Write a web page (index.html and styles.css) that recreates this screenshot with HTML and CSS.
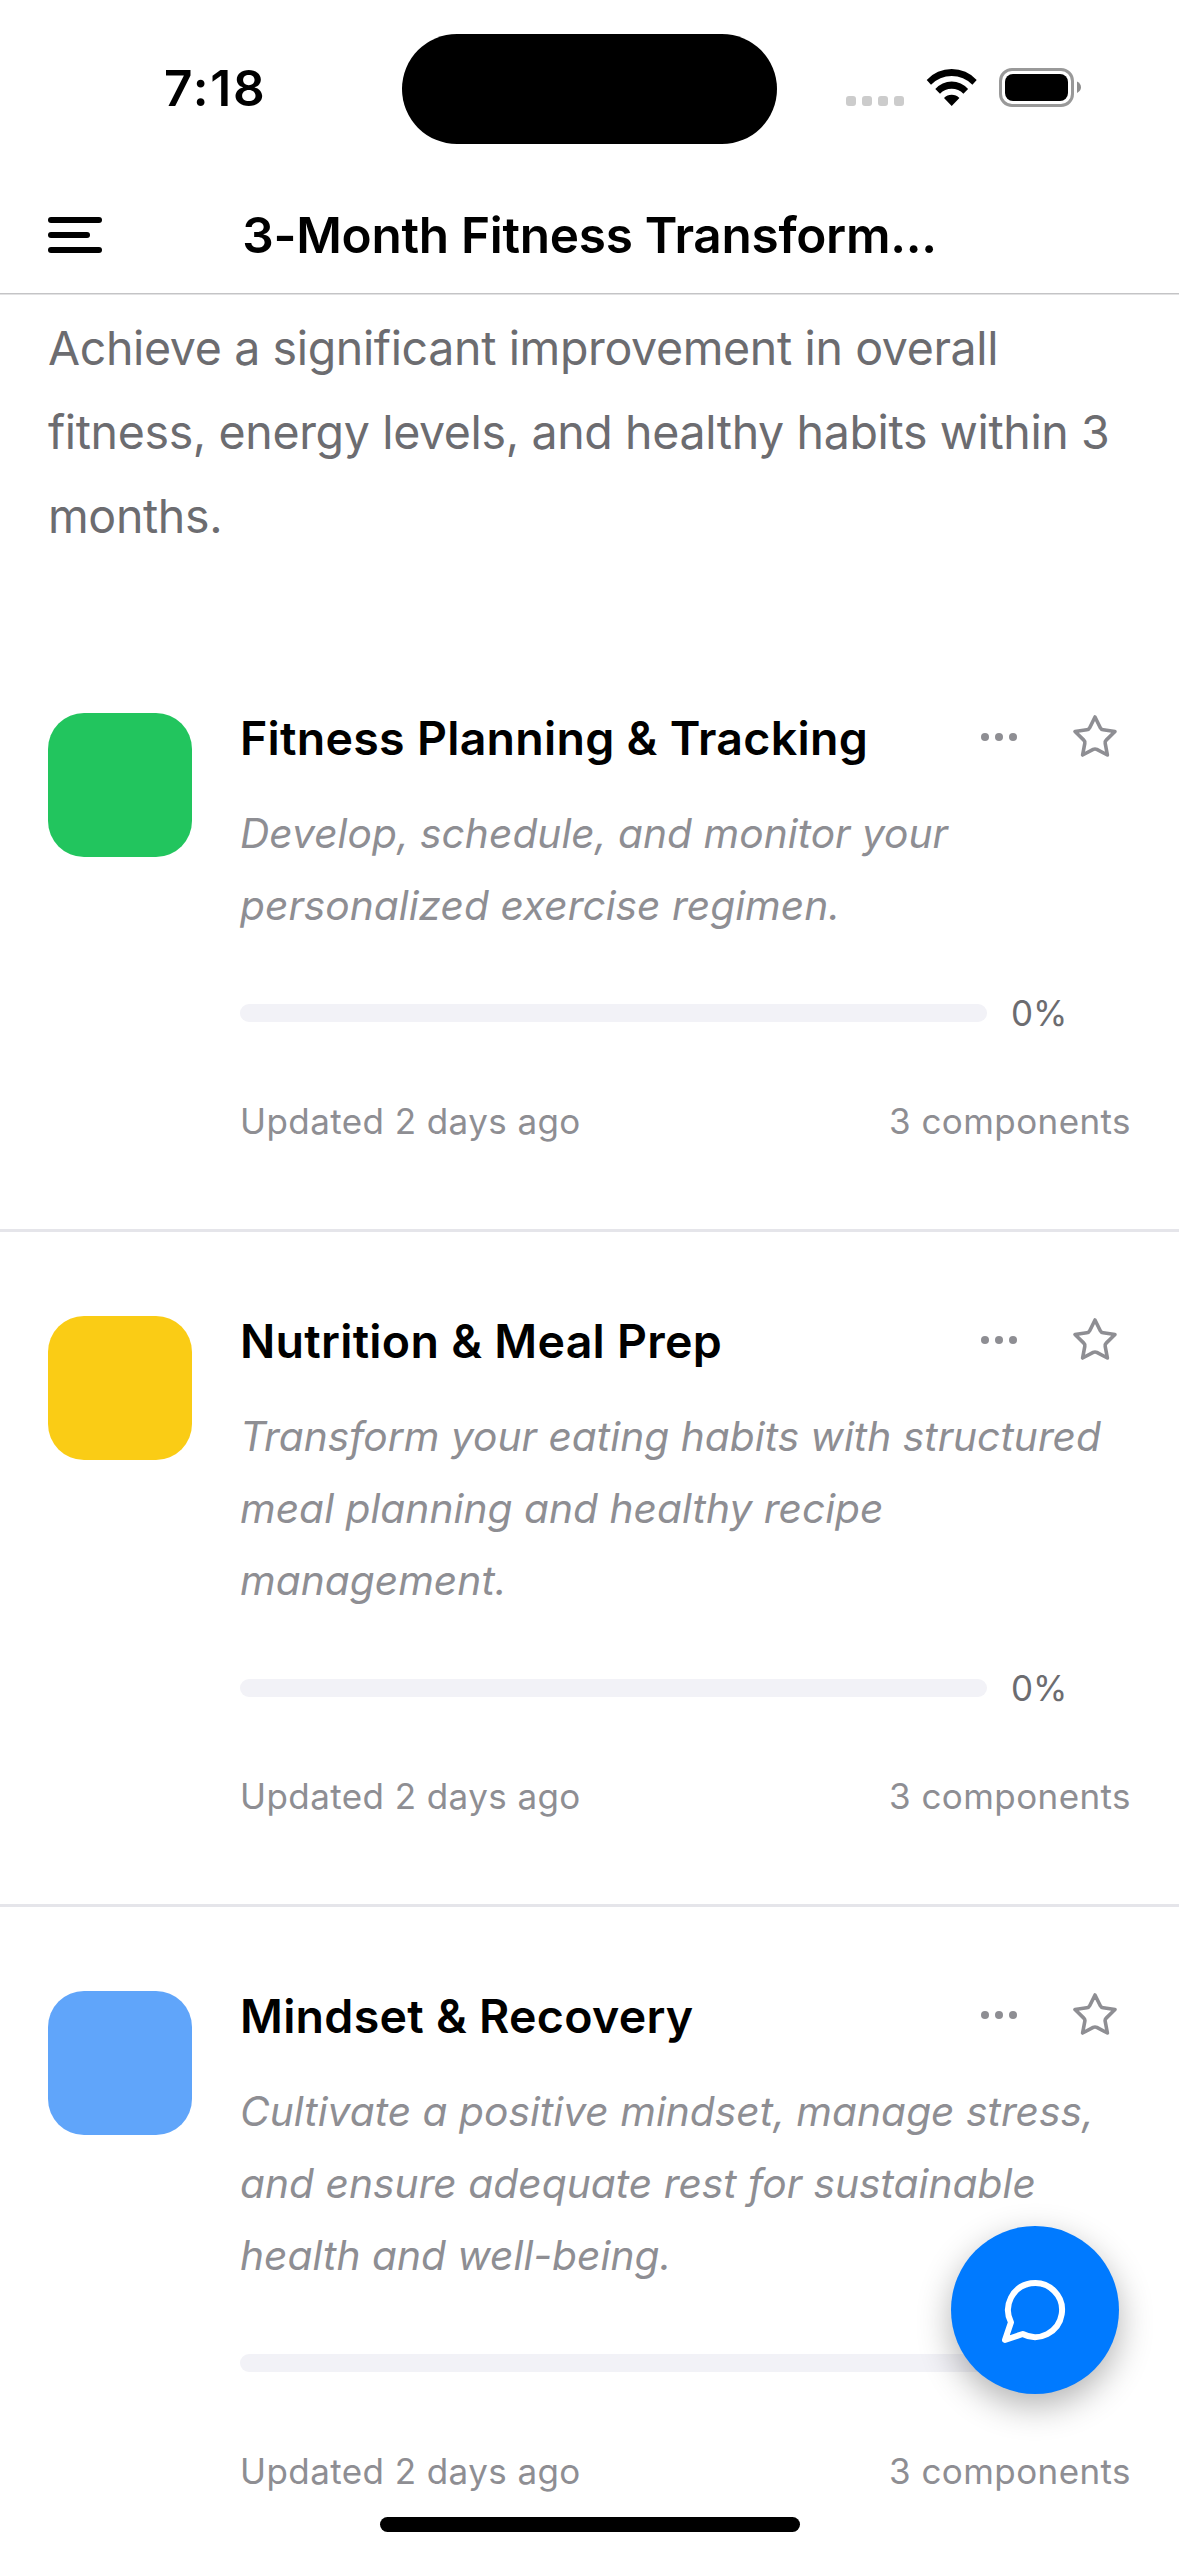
FILE: index.html
```
<!DOCTYPE html>
<html lang="en">
<head>
<meta charset="utf-8">
<title>3-Month Fitness Transformation</title>
<link rel="stylesheet" href="styles.css">
</head>
<body>
<svg class="sprite" aria-hidden="true">
  <symbol id="star" viewBox="0 0 48 48">
    <path d="M24 4L29.3 14.7Q30.2 16.5 32.2 16.8L44 18.5L35.2 27.1Q33.8 28.4 34.2 30.3L36.4 42L25.8 36.4Q24 35.5 22.2 36.4L11.6 42L13.8 30.3Q14.2 28.4 12.8 27.1L4 18.5L15.8 16.8Q17.8 16.5 18.7 14.7Z" fill="none" stroke="#8e8e93" stroke-width="3.6" stroke-linejoin="round"/>
  </symbol>
  <symbol id="more" viewBox="0 0 36 8">
    <circle cx="4" cy="4" r="4" fill="#8e8e93"/><circle cx="18" cy="4" r="4" fill="#8e8e93"/><circle cx="32" cy="4" r="4" fill="#8e8e93"/>
  </symbol>
</svg>
<div class="screen">
  <div class="status">
    <div class="time">7:18</div>
    <div class="island"></div>
    <svg class="indicators" width="236" height="41" viewBox="0 0 236 41">
      <g fill="#ccc">
        <rect x="0" y="28" width="10" height="10" rx="3"/><rect x="16" y="28" width="10" height="10" rx="3"/><rect x="32" y="28" width="10" height="10" rx="3"/><rect x="48" y="28" width="10" height="10" rx="3"/>
      </g>
      <path d="M80.7 12A33.9 33.9 0 0 1 130.7 12L126.4 16.7A29 29 0 0 0 85 16.7ZM89.3 21A21.8 21.8 0 0 1 122.1 21L117.4 25.7A16.4 16.4 0 0 0 94 25.7ZM98 30A11 11 0 0 1 113.4 30L105.7 38Z"/>
      <rect x="154.5" y="1.5" width="72" height="36" rx="11.5" fill="none" stroke="#999" stroke-width="3"/>
      <rect x="159" y="6" width="63" height="27" rx="8"/>
      <path d="M231 13.5Q235 15.5 235 19.3Q235 23 231 25Z" fill="#8e8e8e"/>
    </svg>
  </div>
  <header class="header">
    <div class="menu"><span class="bar"></span><span class="bar bar-short"></span><span class="bar"></span></div>
    <h1 class="title">3-Month Fitness Transform...</h1>
  </header>
  <p class="goal">Achieve a significant improvement in overall fitness, energy levels, and healthy habits within 3 months.</p>

  <article class="card">
    <div class="swatch green"></div>
    <div class="info">
      <div class="head"><h2 class="name">Fitness Planning &amp; Tracking</h2><svg class="more"><use href="#more"/></svg><svg class="star"><use href="#star"/></svg></div>
      <p class="about">Develop, schedule, and monitor your personalized exercise regimen.</p>
      <div class="progress"><div class="track"></div><span class="percent">0%</span></div>
      <div class="meta"><span>Updated 2 days ago</span><span>3 components</span></div>
    </div>
  </article>
  <article class="card">
    <div class="swatch yellow"></div>
    <div class="info">
      <div class="head"><h2 class="name">Nutrition &amp; Meal Prep</h2><svg class="more"><use href="#more"/></svg><svg class="star"><use href="#star"/></svg></div>
      <p class="about">Transform your eating habits with structured meal planning and healthy recipe management.</p>
      <div class="progress"><div class="track"></div><span class="percent">0%</span></div>
      <div class="meta"><span>Updated 2 days ago</span><span>3 components</span></div>
    </div>
  </article>
  <article class="card">
    <div class="swatch blue"></div>
    <div class="info">
      <div class="head"><h2 class="name">Mindset &amp; Recovery</h2><svg class="more"><use href="#more"/></svg><svg class="star"><use href="#star"/></svg></div>
      <p class="about">Cultivate a positive mindset, manage stress, and ensure adequate rest for sustainable health and well-being.</p>
      <div class="progress"><div class="track"></div></div>
      <div class="meta"><span>Updated 2 days ago</span><span>3 components</span></div>
    </div>
  </article>

  <div class="fab">
    <svg width="72" height="72" viewBox="0 0 24 24" fill="none" stroke="#fff" stroke-width="2" stroke-linecap="round" stroke-linejoin="round"><path d="M7.9 20A9 9 0 1 0 4 16.1L2 22Z"/></svg>
  </div>
  <div class="home"></div>
</div>
</body>
</html>
```
FILE: styles.css
```
* { box-sizing: border-box; margin: 0; padding: 0; }
body { background: #fff; font-family: Inter, "Liberation Sans", sans-serif; }
.sprite { display: none; }
.screen { position: relative; width: 1179px; height: 2556px; overflow: hidden; background: #fff; }

.status { display: grid; grid-template-columns: 402px 375px 402px; align-items: center; height: 177px; padding: 34px 0 33px; }
.time { padding: 0 0 3px 164px; font-size: 49.5px; font-weight: 600; letter-spacing: 1.8px; line-height: 60px; }
.island { height: 110px; border-radius: 55px; background: #000; }
.indicators { margin: -1px 0 0 69px; }

.header { display: grid; grid-template-columns: 54px 1fr 54px; align-items: center; height: 117px; padding: 0 48px; border-bottom: 1px solid #c4c4c6; box-shadow: 0 1px 0 #e2e2e3; }
.menu { display: flex; flex-direction: column; gap: 9px; }
.bar { width: 54px; height: 6px; border-radius: 3px; background: #000; }
.bar-short { width: 42px; }
.title { font-size: 49.5px; font-weight: 600; letter-spacing: -0.27px; line-height: 60px; text-align: center; white-space: nowrap; }

.goal { padding: 12px 48px 71px; font-size: 46.5px; line-height: 84px; letter-spacing: -0.36px; color: #6c6c70; }

.card { display: flex; gap: 48px; padding: 84px 48px 83px; border-bottom: 3px solid #e5e5ea; }
.swatch { flex: none; width: 144px; height: 144px; border-radius: 36px; }
.green { background: #22c55e; }
.yellow { background: #facc15; }
.blue { background: #60a5fa; }
.info { flex: 1; min-width: 0; }
.head { display: flex; align-items: center; height: 48px; padding-right: 12px; }
.name { flex: 1; padding-top: 2px; font-size: 46.5px; font-weight: 600; letter-spacing: 0.28px; line-height: 48px; white-space: nowrap; }
.more { width: 36px; height: 8px; margin-right: 54px; }
.star { width: 48px; height: 48px; }
.about { margin-top: 37px; font-size: 40.7px; font-style: italic; line-height: 72px; letter-spacing: 0.03px; color: #8e8e93; }
.progress { display: flex; align-items: center; gap: 24px; height: 50px; margin-top: 46px; }
.track { width: 747px; height: 18px; border-radius: 9px; background: #f2f2f7; }
.percent { font-size: 35px; line-height: 50px; color: #6c6c70; }
.meta { display: flex; justify-content: space-between; margin-top: 58px; font-size: 35px; line-height: 50px; letter-spacing: 0.42px; color: #8e8e93; }

.fab { position: absolute; left: 951px; top: 2226px; display: flex; align-items: center; justify-content: center; width: 168px; height: 168px; border-radius: 50%; background: #007aff; box-shadow: 0 12px 34px rgba(0, 0, 0, 0.3); }
.home { position: absolute; left: 380px; top: 2517px; width: 420px; height: 15px; border-radius: 8px; background: #000; }
```
